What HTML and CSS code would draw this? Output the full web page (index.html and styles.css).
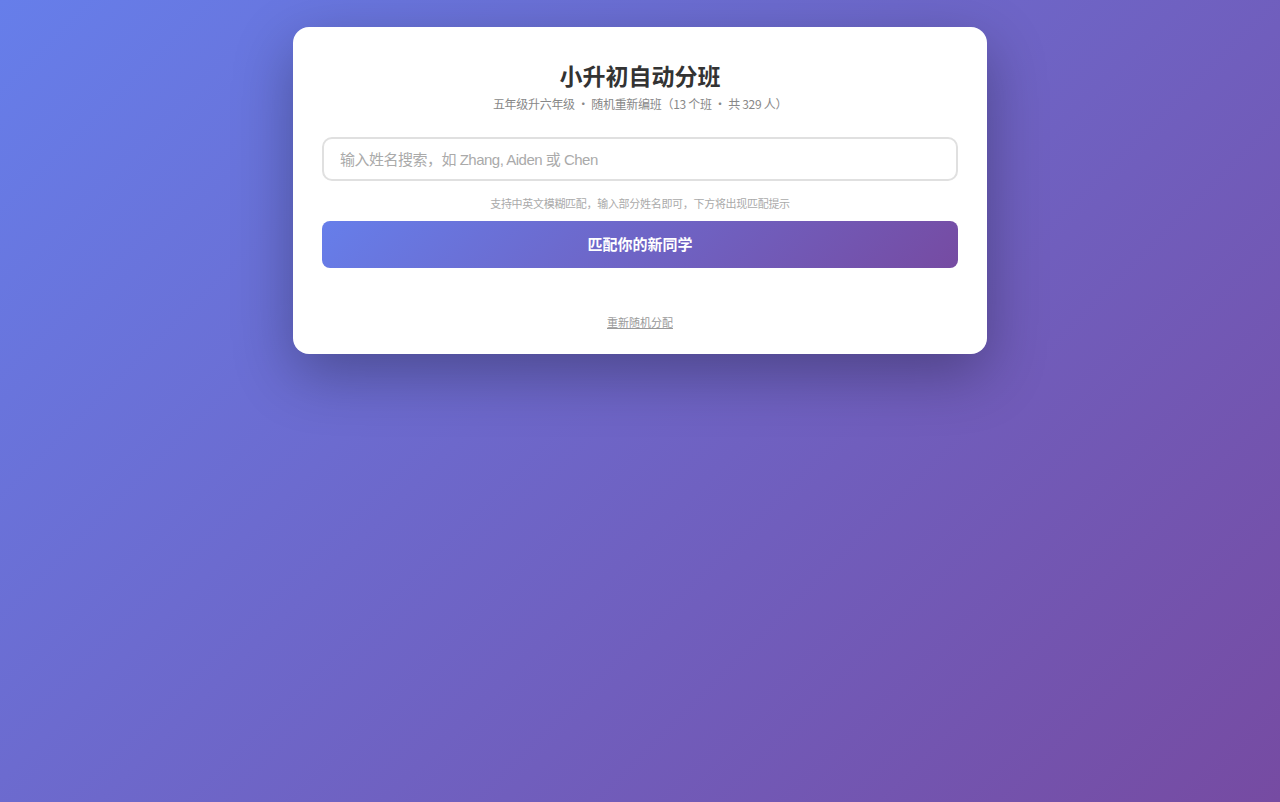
FILE: index.html
```html
<!DOCTYPE html>
<html lang="zh-CN">
  <head>
    <meta charset="UTF-8" />
    <meta name="viewport" content="width=device-width, initial-scale=1.0" />
    <title>小升初自动分班</title>
    <link rel="stylesheet" href="styles.css">
  </head>
  <body>
    <div class="card">
      <h1>小升初自动分班</h1>
      <p class="subtitle">五年级升六年级 · 随机重新编班（13 个班 · 共 329 人）</p>

      <input
        type="text"
        id="nameInput"
        class="search"
        placeholder="输入姓名搜索，如 Zhang, Aiden 或 Chen"
      />
      <p class="hint">支持中英文模糊匹配，输入部分姓名即可，下方将出现匹配提示</p>

      <button type="button" class="match-btn">匹配你的新同学</button>

      <div class="footer">
        <a href="#" class="reshuffle">重新随机分配</a>
      </div>
    </div>
  </body>
</html>
```

FILE: styles.css
```css
* {
  box-sizing: border-box;
}
html,
body {
  margin: 0;
  min-height: 100%;
}
body {
  font-family: "Noto Sans CJK SC", "Noto Sans", sans-serif;
  background: linear-gradient(135deg, #667eea 0%, #764ba2 100%);
  min-height: 100vh;
  padding: 27px 20px;
}
.card {
  width: 694px;
  margin: 0 auto;
  background: #fff;
  border-radius: 16px;
  padding: 32px 29px 24px;
  box-shadow: 0 20px 60px rgba(0, 0, 0, 0.3);
}
h1 {
  margin: 0;
  text-align: center;
  font-size: 23px;
  line-height: 32px;
  font-weight: bold;
  color: #333;
}
.subtitle {
  margin: 4px 0 0;
  text-align: center;
  font-size: 12px;
  letter-spacing: -0.3px;
  line-height: 18px;
  color: #888;
}
.search {
  display: block;
  width: 100%;
  height: 44px;
  margin-top: 24px;
  padding: 0 16px;
  border: 2px solid #e0e0e0;
  border-radius: 10px;
  font-family: "Liberation Sans", "Noto Sans CJK SC", sans-serif;
  font-size: 15px;
  letter-spacing: -0.5px;
  color: #333;
  outline: none;
}
.search::placeholder {
  color: #aaa;
}
.hint {
  margin: 14px 0 0;
  text-align: center;
  font-size: 11px;
  letter-spacing: -0.3px;
  line-height: 16px;
  color: #aaa;
}
.match-btn {
  display: block;
  width: 100%;
  height: 47px;
  margin-top: 10px;
  padding: 0 0 2px;
  border: none;
  border-radius: 8px;
  background: linear-gradient(135deg, #667eea 0%, #764ba2 100%);
  color: #fff;
  font-family: "Noto Sans CJK SC", sans-serif;
  font-size: 15px;
  font-weight: bold;
  cursor: pointer;
}
.footer {
  margin-top: 44px;
  text-align: center;
  line-height: 16px;
}
.reshuffle {
  font-size: 11px;
  color: #999;
  text-decoration: underline;
}
```
